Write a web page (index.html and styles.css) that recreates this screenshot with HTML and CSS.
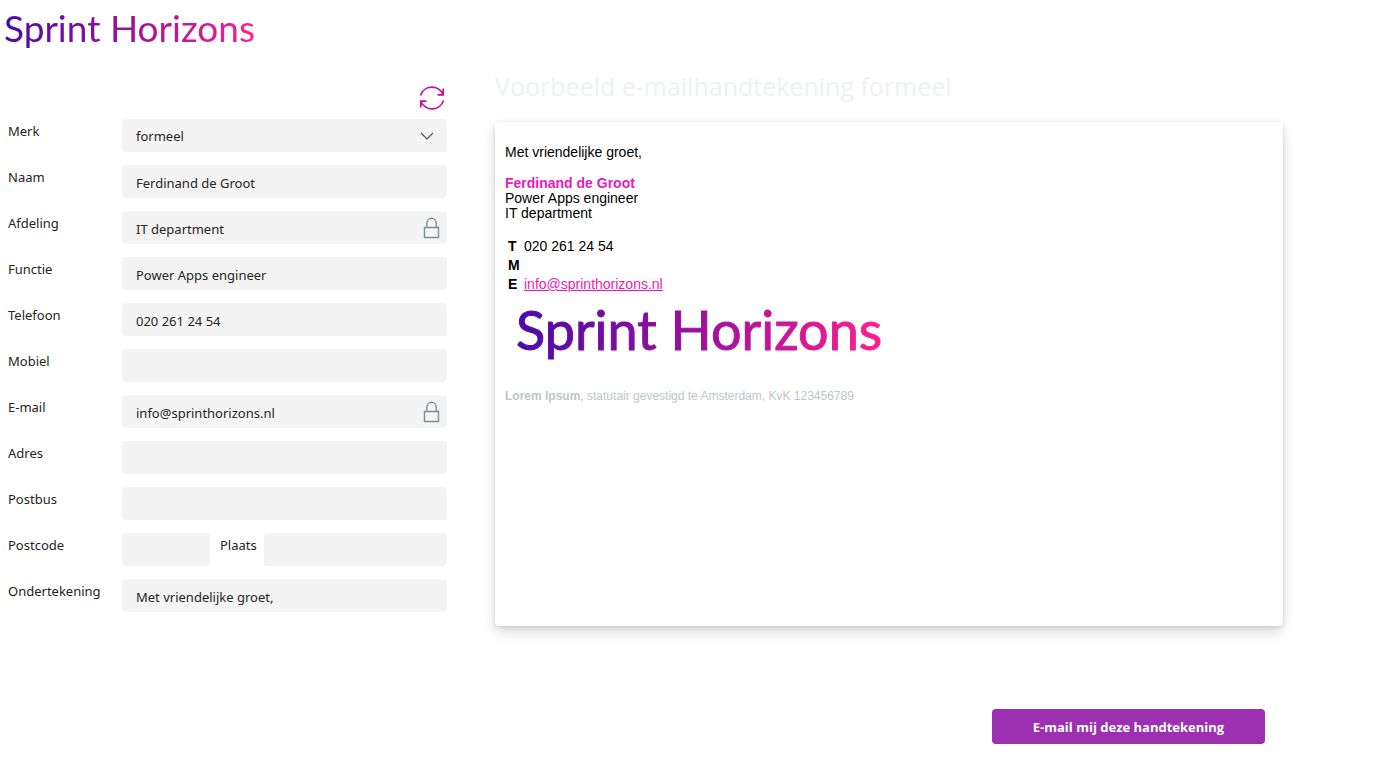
FILE: index.html
```html
<!DOCTYPE html>
<html lang="nl">
<head>
<meta charset="utf-8">
<meta name="viewport" content="width=device-width, initial-scale=1">
<title>Sprint Horizons - E-mailhandtekening</title>
<link rel="stylesheet" href="styles.css">
</head>
<body>
<header class="site-header"><span class="wordmark">Sprint Horizons</span></header>
<main class="layout">
  <form class="form" id="signature-form">
    <div class="toolbar">
      <button class="refresh" type="button" aria-label="Vernieuwen">
        <svg viewBox="0 0 28 28" width="28" height="28" fill="none" stroke="currentColor" stroke-width="1.7">
          <path d="M2.5 11.5A12 12 0 0 1 25 10.5M25.2 4.5V10.8H19.5"/>
          <path d="M25.5 16.5A12 12 0 0 1 3 17.5M2.8 23.5V17.2H8.5"/>
        </svg>
      </button>
    </div>
    <div class="row">
      <label for="merk">Merk</label>
      <div class="field">
        <select id="merk" class="control select"><option>formeel</option></select>
        <svg class="chevron" viewBox="0 0 14 8" width="14" height="8" fill="none" stroke="currentColor" stroke-width="1.2"><path d="M1 1l6 6 6-6"/></svg>
      </div>
    </div>
    <div class="row">
      <label for="naam">Naam</label>
      <div class="field"><input id="naam" class="control" type="text" value="Ferdinand de Groot"></div>
    </div>
    <div class="row">
      <label for="afdeling">Afdeling</label>
      <div class="field">
        <input id="afdeling" class="control" type="text" value="IT department" readonly>
        <svg class="lock" viewBox="0 0 17 22" width="17" height="22" fill="none" stroke="currentColor" stroke-width="1.4"><path d="M1.5 10.5h14v10h-14zM3.8 10.5V6a4.7 4.7 0 0 1 9.4 0v4.5"/></svg>
      </div>
    </div>
    <div class="row">
      <label for="functie">Functie</label>
      <div class="field"><input id="functie" class="control" type="text" value="Power Apps engineer"></div>
    </div>
    <div class="row">
      <label for="telefoon">Telefoon</label>
      <div class="field"><input id="telefoon" class="control" type="tel" value="020 261 24 54"></div>
    </div>
    <div class="row">
      <label for="mobiel">Mobiel</label>
      <div class="field"><input id="mobiel" class="control" type="tel"></div>
    </div>
    <div class="row">
      <label for="email">E-mail</label>
      <div class="field">
        <input id="email" class="control" type="email" value="info@sprinthorizons.nl" readonly>
        <svg class="lock" viewBox="0 0 17 22" width="17" height="22" fill="none" stroke="currentColor" stroke-width="1.4"><path d="M1.5 10.5h14v10h-14zM3.8 10.5V6a4.7 4.7 0 0 1 9.4 0v4.5"/></svg>
      </div>
    </div>
    <div class="row">
      <label for="adres">Adres</label>
      <div class="field"><input id="adres" class="control" type="text"></div>
    </div>
    <div class="row">
      <label for="postbus">Postbus</label>
      <div class="field"><input id="postbus" class="control" type="text"></div>
    </div>
    <div class="row row-split">
      <label for="postcode">Postcode</label>
      <div class="field"><input id="postcode" class="control" type="text"></div>
      <label class="inner-label" for="plaats">Plaats</label>
      <div class="field"><input id="plaats" class="control" type="text"></div>
    </div>
    <div class="row">
      <label for="ondertekening">Ondertekening</label>
      <div class="field"><input id="ondertekening" class="control" type="text" value="Met vriendelijke groet,"></div>
    </div>
  </form>

  <section class="preview">
    <h1 class="preview-title">Voorbeeld e-mailhandtekening formeel</h1>
    <article class="card">
      <p class="greeting">Met vriendelijke groet,</p>
      <p class="person"><strong>Ferdinand de Groot</strong><br>Power Apps engineer<br>IT department</p>
      <table class="contact">
        <tr><th scope="row">T</th><td>020 261 24 54</td></tr>
        <tr><th scope="row">M</th><td></td></tr>
        <tr><th scope="row">E</th><td><a href="mailto:info@sprinthorizons.nl">info@sprinthorizons.nl</a></td></tr>
      </table>
      <div class="card-logo"><span class="wordmark wordmark-large">Sprint Horizons</span></div>
      <p class="legal"><b>Lorem Ipsum</b>, statutair gevestigd te Amsterdam, KvK 123456789</p>
    </article>
    <div class="actions"><button class="send" type="submit" form="signature-form">E-mail mij deze handtekening</button></div>
  </section>
</main>
</body>
</html>
```
FILE: styles.css
```css
* { box-sizing: border-box; }

body {
  margin: 0;
  background: #fff;
  color: #252423;
  font: 13px/20px "Noto Sans", "Open Sans", sans-serif;
}

.site-header { padding: 6px 4px 0; }

.wordmark {
  display: inline-block;
  background: linear-gradient(90deg, #4b0aa8, #9c119b 50%, #ff1f91);
  background-clip: text;
  -webkit-background-clip: text;
  color: transparent;
  font: 37px/44px Lato, sans-serif;
  white-space: nowrap;
}

.wordmark-large {
  font-size: 54px;
  line-height: 64px;
  -webkit-text-stroke: 1px transparent;
}

.layout {
  display: grid;
  grid-template-columns: 439px minmax(0, 1fr);
  column-gap: 48px;
  padding: 16px 91px 28px 8px;
}

.form {
  display: flex;
  flex-direction: column;
  gap: 13px;
}

.toolbar {
  display: flex;
  justify-content: flex-end;
  padding: 18px 1px 0 0;
  margin-bottom: -6px;
}

.refresh {
  width: 28px;
  height: 28px;
  padding: 0;
  border: 0;
  background: none;
  color: #c80fa0;
}

.refresh svg { display: block; }

.row {
  display: grid;
  grid-template-columns: 114px minmax(0, 1fr);
}

.row-split { grid-template-columns: 114px 88px 54px minmax(0, 1fr); }

.row label { padding-top: 2px; }
.row .inner-label { padding-left: 10px; }

.field {
  display: flex;
  align-items: center;
  height: 33px;
  border-radius: 4px;
  background: #f4f4f4;
}

.control {
  flex: 1;
  min-width: 0;
  height: 33px;
  padding: 3px 14px 0;
  border: 0;
  background: none;
  color: inherit;
  font: inherit;
}

.select {
  appearance: none;
  padding-top: 0;
}

.chevron { margin-right: 13px; color: #555; }
.lock { margin-right: 7px; color: #7c8f93; }

.preview-title {
  margin: 0;
  color: #ecf1f5;
  font: 400 25px/40px "Open Sans", "Noto Sans", sans-serif;
}

.card {
  min-height: 504px;
  margin-top: 16px;
  padding: 23px 10px;
  border-radius: 4px;
  background: #fff;
  box-shadow: 0 6px 14px rgba(0, 0, 0, 0.14), 0 1px 4px rgba(0, 0, 0, 0.12);
  color: #000;
  font: 14px/15px "Liberation Sans", Arial, sans-serif;
}

.card p { margin: 0 0 16px; }
.person strong { color: #e61bb9; }

.contact { border-spacing: 0; }

.contact th,
.contact td {
  height: 19px;
  padding: 0;
  text-align: left;
}

.contact th {
  width: 19px;
  padding-left: 3px;
}

.contact a { color: #e61bb9; }

.card-logo { padding: 4px 0 27px 11px; }

.card .legal {
  color: #c0c6c9;
  font-size: 12px;
}

.actions {
  display: flex;
  justify-content: flex-end;
  padding: 83px 18px 0 0;
}

.send {
  width: 273px;
  height: 35px;
  border: 0;
  border-radius: 4px;
  background: #9c30b0;
  color: #fff;
  font: 700 13px/20px "Open Sans", "Noto Sans", sans-serif;
}
```
